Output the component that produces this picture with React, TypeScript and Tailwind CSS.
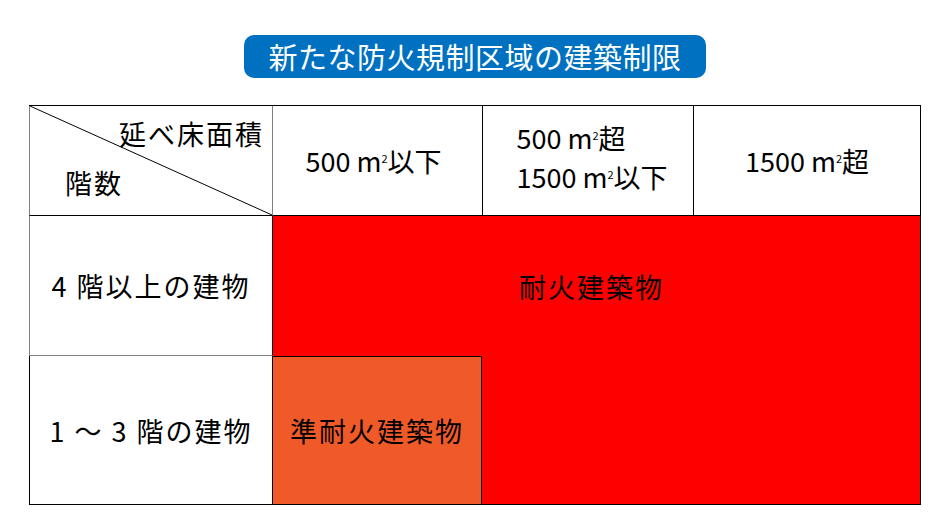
const jp = { fontFamily: '"Noto Sans CJK JP", "Noto Sans", sans-serif' }

function Sqm() {
    return (
        <span>
            m<span className="relative -top-[9px] text-[11px]">2</span>
        </span>
    )
}

export default function App() {
    return (
        <div className="w-[950px] h-[530px] bg-white overflow-hidden" style={jp}>
            {/* Title pill */}
            <div className="mt-[35px] mx-auto w-[462px] h-[43px] rounded-[10px] bg-[#0070c0] flex items-center justify-center">
                <span className="text-white text-[29px] leading-none tracking-[0.5px]">新たな防火規制区域の建築制限</span>
            </div>

            {/* Table */}
            <div className="mt-[27px] mx-auto w-[892px] grid grid-cols-[244px_210px_211px_227px] grid-rows-[110px_140px_149px] border-t border-black text-[27px] text-black leading-none">
                {/* Header: diagonal cell */}
                <div className="relative border-l border-r border-b border-l-[#808080] border-r-[#808080] border-b-black">
                    <svg className="absolute inset-0" width="100%" height="100%" viewBox="0 0 243 109" preserveAspectRatio="none">
                        <line x1="0" y1="0" x2="243" y2="109" stroke="#000" strokeWidth="1" />
                    </svg>
                    <div className="absolute right-[8px] top-[14px] tracking-[2px]">延べ床面積</div>
                    <div className="absolute left-[35px] top-[63px] tracking-[2px]">階数</div>
                </div>
                <div className="border-r border-b border-black flex items-center justify-center pr-[8px]">
                    <span>500 <Sqm />以下</span>
                </div>
                <div className="border-r border-b border-black flex items-center justify-center pl-[8px] pb-[8px]">
                    <div className="flex flex-col items-start gap-[12px]">
                        <span>500 <Sqm />超</span>
                        <span>1500 <Sqm />以下</span>
                    </div>
                </div>
                <div className="border-r border-b border-black flex items-center justify-center">
                    <span>1500 <Sqm />超</span>
                </div>

                {/* Row: 4階以上 */}
                <div className="border-l border-r border-b border-l-[#808080] border-r-black border-b-[#808080] flex items-center justify-center tracking-[2px]">
                    4 階以上の建物
                </div>
                <div className="col-span-3 bg-[#ff0000] border-r border-black flex items-center justify-center tracking-[2px] pr-[10px]">
                    耐火建築物
                </div>

                {/* Row: 1～3階 */}
                <div className="border-l border-r border-b border-black flex items-center justify-center tracking-[2px]">
                    1 ～ 3 階の建物
                </div>
                <div className="flex bg-[#ff0000] border-b border-black">
                    <div className="w-[209px] bg-[#f05a28] border-t border-r border-black flex items-center justify-center tracking-[2px]">
                        準耐火建築物
                    </div>
                </div>
                <div className="col-span-2 bg-[#ff0000] border-r border-b border-black" />
            </div>
        </div>
    )
}
